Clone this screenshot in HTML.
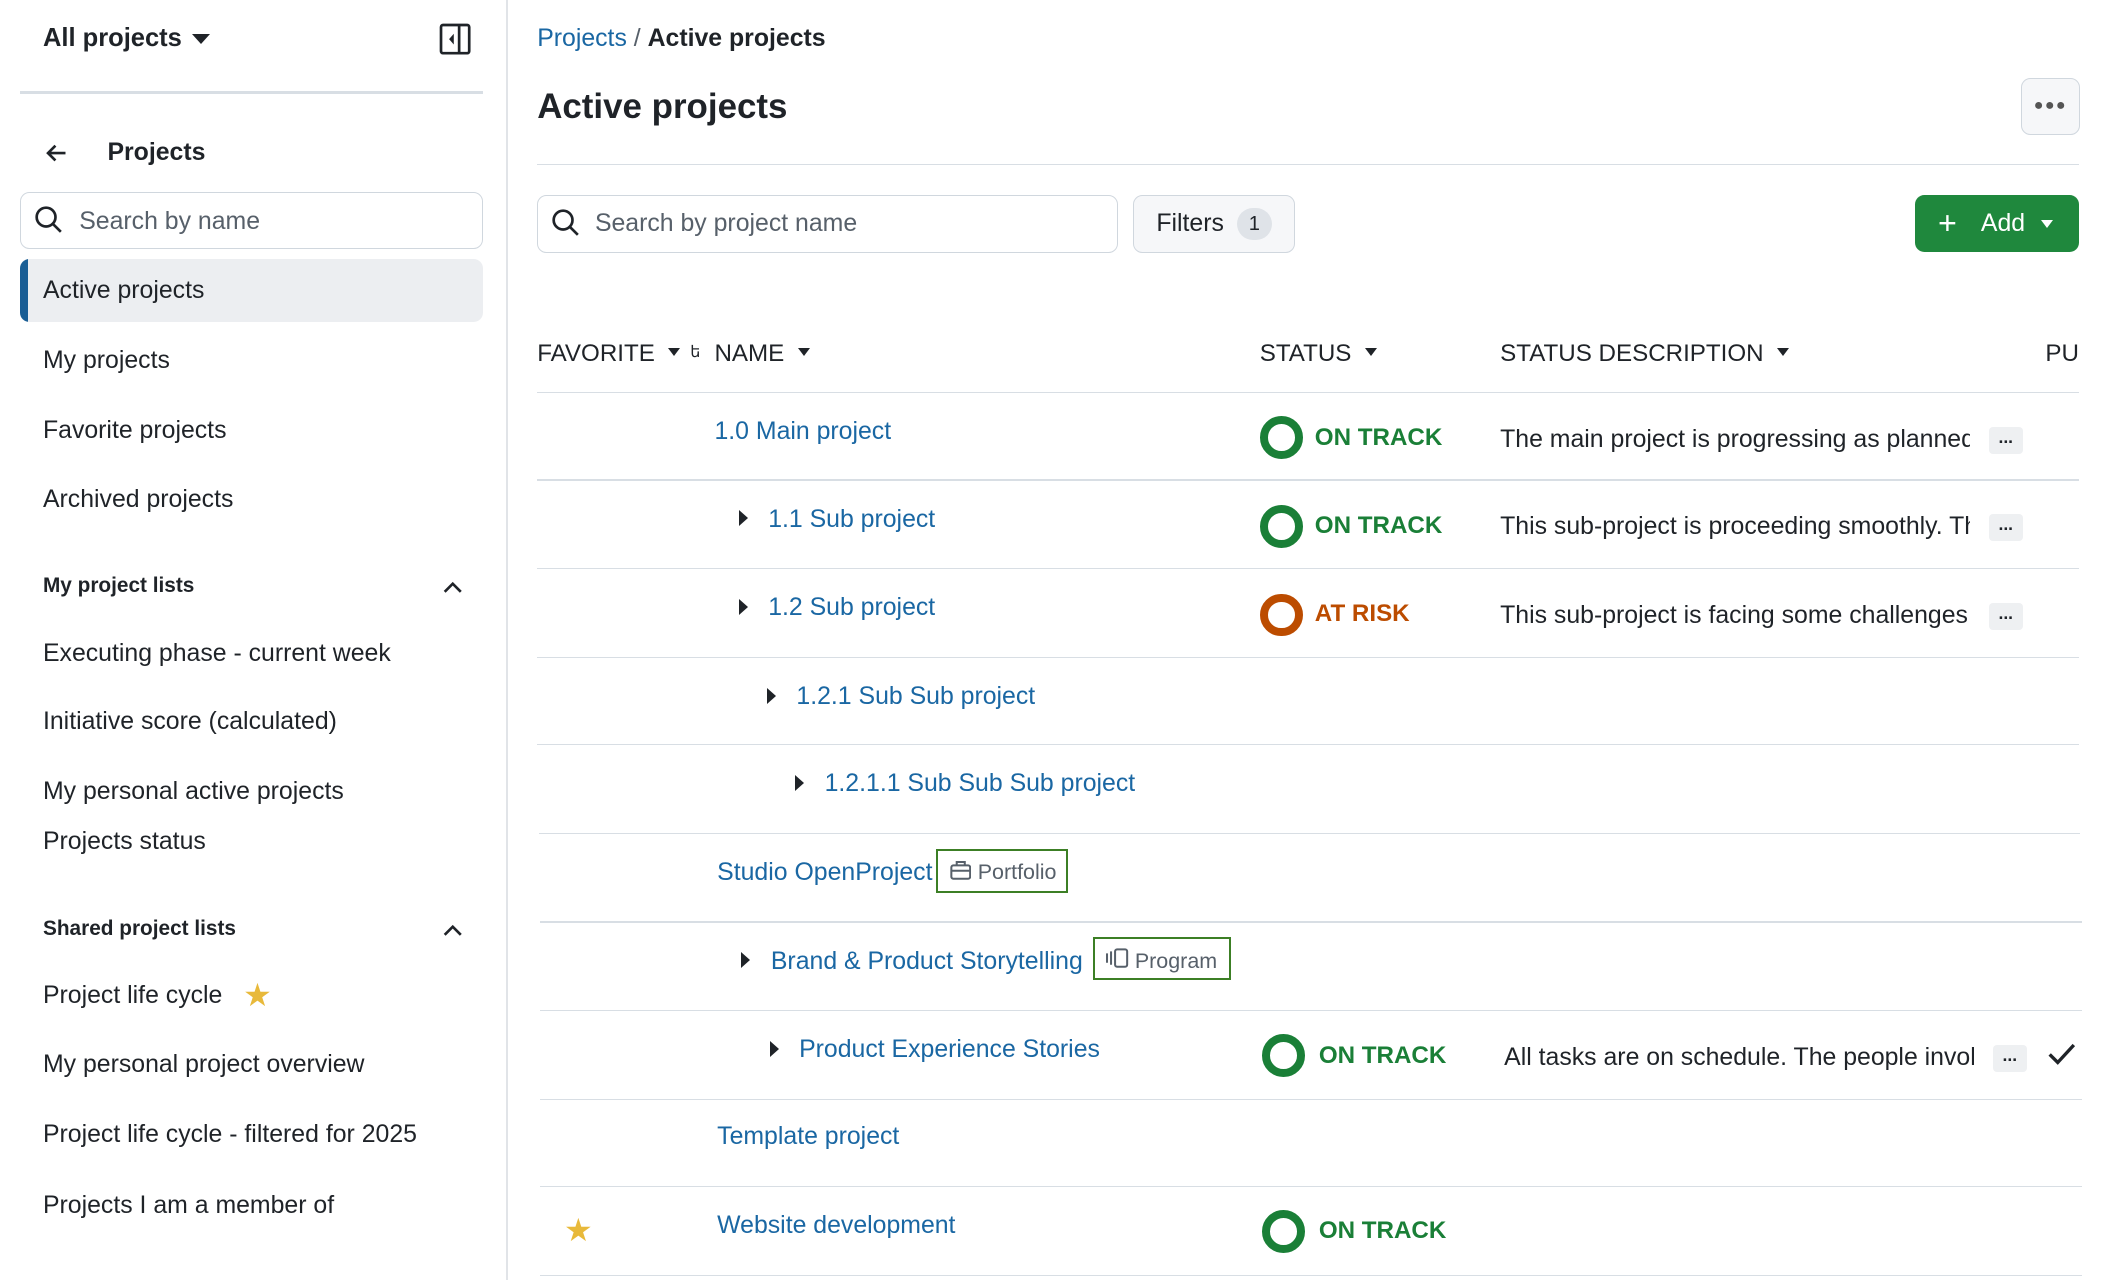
<!DOCTYPE html>
<html><head><meta charset="utf-8"><style>
html,body{margin:0;padding:0;background:#fff;overflow:hidden;width:2105px;height:1280px}
#w{zoom:1.343;width:1568px;height:954px;position:relative;font-family:"Liberation Sans",sans-serif;color:#1f2328;font-size:18.5px}
.a{position:absolute;white-space:nowrap;line-height:1}
.l{color:#1a67a3}
.hr{position:absolute;height:1px;background:#d8dee4}
.st{position:absolute;width:20px;height:20px;border-radius:50%;border:6px solid #1a7f37}
.ok{color:#1a7f37;font-weight:bold;font-size:18px}
.risk{color:#bc4c00;font-weight:bold;font-size:18px}
.dots{position:absolute;width:25px;height:20px;background:#eef0f2;border-radius:3px;font-size:13px;text-align:center;line-height:16px;font-weight:bold}
.car{position:absolute;width:0;height:0;border-top:6px solid transparent;border-bottom:6px solid transparent;border-left:7px solid #1f2328}
.dn{position:absolute;width:0;height:0;border-left:6px solid transparent;border-right:6px solid transparent;border-top:7px solid #1f2328}
.di{display:inline-block;width:0;height:0;border-left:5px solid transparent;border-right:5px solid transparent;border-top:6px solid #1f2328;vertical-align:middle;margin-left:10px;position:relative;top:-2px}
.desc{position:absolute;width:350px;overflow:hidden;white-space:nowrap;line-height:1.1}
</style></head><body><div id="w">
<!-- sidebar -->
<div style="position:absolute;left:377px;top:0;width:1px;height:954px;background:#e1e4e8"></div>
<div class="a" style="left:32px;top:19px;font-size:19px;font-weight:bold">All projects</div>
<div class="dn" style="left:143px;top:25px;border-width:8px 7px 0 7px"></div>
<svg class="a" style="left:327px;top:17px" width="24" height="24" viewBox="0 0 24 24"><rect x="1.5" y="1.5" width="21" height="21" rx="1.5" fill="none" stroke="#1f2328" stroke-width="2"/><line x1="15" y1="2" x2="15" y2="22" stroke="#1f2328" stroke-width="2"/><path d="M11 8v8l-3.5-4z" fill="#1f2328"/></svg>
<div class="hr" style="left:15px;top:68px;width:345px;height:2px"></div>
<svg class="a" style="left:33px;top:105px" width="18" height="18" viewBox="0 0 18 18"><path d="M16 9H3M8.5 3.5L3 9l5.5 5.5" fill="none" stroke="#1f2328" stroke-width="2"/></svg>
<div class="a" style="left:80px;top:105px;font-size:18.5px;font-weight:bold">Projects</div>
<div style="position:absolute;left:15px;top:143px;width:343px;height:41px;border:1px solid #d0d7de;border-radius:7px"></div>
<svg class="a" style="left:25px;top:153px" width="22" height="22" viewBox="0 0 22 22"><circle cx="9" cy="9" r="7" fill="none" stroke="#1f2328" stroke-width="2"/><path d="M14 14l6 6" stroke="#1f2328" stroke-width="2"/></svg>
<div class="a" style="left:59px;top:156px;color:#57606a">Search by name</div>
<div style="position:absolute;left:15px;top:193px;width:345px;height:47px;background:#eceef1;border-radius:7px;overflow:hidden"><div style="width:6px;height:47px;background:#1a5e95"></div></div>
<div class="a" style="left:32px;top:208px">Active projects</div>
<div class="a" style="left:32px;top:260px">My projects</div>
<div class="a" style="left:32px;top:312px">Favorite projects</div>
<div class="a" style="left:32px;top:363px">Archived projects</div>
<div class="a" style="left:32px;top:429px;font-size:15.5px;font-weight:bold">My project lists</div>
<svg class="a" style="left:329px;top:430px" width="16" height="14" viewBox="0 0 16 14"><path d="M2 11l6-6 6 6" fill="none" stroke="#1f2328" stroke-width="2"/></svg>
<div class="a" style="left:32px;top:478px">Executing phase - current week</div>
<div class="a" style="left:32px;top:529px">Initiative score (calculated)</div>
<div class="a" style="left:32px;top:581px">My personal active projects</div>
<div class="a" style="left:32px;top:618px">Projects status</div>
<div class="a" style="left:32px;top:684px;font-size:15.5px;font-weight:bold">Shared project lists</div>
<svg class="a" style="left:329px;top:685px" width="16" height="14" viewBox="0 0 16 14"><path d="M2 11l6-6 6 6" fill="none" stroke="#1f2328" stroke-width="2"/></svg>
<div class="a" style="left:32px;top:733px">Project life cycle</div>
<div class="a" style="left:181px;top:729px;color:#e8b93a;font-size:24px">★</div>
<div class="a" style="left:32px;top:784px">My personal project overview</div>
<div class="a" style="left:32px;top:836px">Project life cycle - filtered for 2025</div>
<div class="a" style="left:32px;top:889px">Projects I am a member of</div>
<!-- main -->
<div class="a" style="left:400px;top:20px"><span class="l">Projects</span> <span style="color:#57606a">/</span> <span style="font-weight:bold">Active projects</span></div>
<div class="a" style="left:400px;top:67px;font-size:26px;font-weight:bold">Active projects</div>
<div style="position:absolute;left:1505px;top:58px;width:42px;height:41px;background:#f6f7f9;border:1px solid #d0d7de;border-radius:7px;text-align:center;line-height:40px;font-weight:bold;color:#555;letter-spacing:1px;font-size:12px">●●●</div>
<div class="hr" style="left:400px;top:122px;width:1148px"></div>
<div style="position:absolute;left:400px;top:145px;width:431px;height:42px;border:1px solid #d0d7de;border-radius:7px"></div>
<svg class="a" style="left:410px;top:155px" width="22" height="22" viewBox="0 0 22 22"><circle cx="9" cy="9" r="7" fill="none" stroke="#1f2328" stroke-width="2"/><path d="M14 14l6 6" stroke="#1f2328" stroke-width="2"/></svg>
<div class="a" style="left:443px;top:158px;color:#57606a">Search by project name</div>
<div style="position:absolute;left:844px;top:145px;width:119px;height:42px;background:#f6f7f9;border:1px solid #d0d7de;border-radius:7px"></div>
<div class="a" style="left:861px;top:158px">Filters</div>
<div style="position:absolute;left:921px;top:155px;width:26px;height:24px;border-radius:12px;background:#dfe3e8;font-size:15px;text-align:center;line-height:24px">1</div>
<div style="position:absolute;left:1426px;top:145px;width:122px;height:43px;background:#1f883d;border-radius:7px"></div>
<div class="a" style="left:1443px;top:154px;color:#fff;font-size:24px">+</div>
<div class="a" style="left:1475px;top:158px;color:#fff">Add</div>
<div class="dn" style="left:1520px;top:164px;border-top-color:#fff;border-width:6px 5px 0 5px"></div>
<!-- header -->
<div class="a" style="left:400px;top:255px;font-size:18px">FAVORITE<span class="di"></span></div>
<div class="a" style="left:514px;top:256px;font-size:12px">ե</div>
<div class="a" style="left:532px;top:255px;font-size:18px">NAME<span class="di"></span></div>
<div class="a" style="left:938px;top:255px;font-size:18px">STATUS<span class="di"></span></div>
<div class="a" style="left:1117px;top:255px;font-size:18px">STATUS DESCRIPTION<span class="di"></span></div>
<div class="a" style="left:1523px;top:255px;font-size:18px;width:25px;overflow:hidden">PU</div>
<div class="hr" style="left:400px;top:292px;width:1148px"></div>
<div class="hr" style="left:400px;top:357px;width:1148px"></div>
<div class="hr" style="left:400px;top:423px;width:1148px"></div>
<div class="hr" style="left:400px;top:489px;width:1148px"></div>
<div class="hr" style="left:400px;top:554px;width:1148px"></div>
<div class="hr" style="left:401px;top:620px;width:1148px"></div>
<div class="hr" style="left:402px;top:686px;width:1148px"></div>
<div class="hr" style="left:402px;top:752px;width:1148px"></div>
<div class="hr" style="left:402px;top:818px;width:1148px"></div>
<div class="hr" style="left:402px;top:883px;width:1148px"></div>
<div class="hr" style="left:402px;top:949px;width:1148px"></div>
<!-- rows -->
<div class="a l" style="left:532px;top:313px">1.0 Main project</div>
<div class="st" style="left:938px;top:310px"></div><div class="a ok" style="left:979px;top:317px">ON TRACK</div>
<div class="desc" style="left:1117px;top:317px">The main project is progressing as planned</div><div class="dots" style="left:1481px;top:318px">...</div>

<div class="car" style="left:550px;top:380px"></div><div class="a l" style="left:572px;top:378px">1.1 Sub project</div>
<div class="st" style="left:938px;top:376px"></div><div class="a ok" style="left:979px;top:383px">ON TRACK</div>
<div class="desc" style="left:1117px;top:382px">This sub-project is proceeding smoothly. The</div><div class="dots" style="left:1481px;top:383px">...</div>

<div class="car" style="left:550px;top:446px"></div><div class="a l" style="left:572px;top:444px">1.2 Sub project</div>
<div class="st" style="left:938px;top:442px;border-color:#bc4c00"></div><div class="a risk" style="left:979px;top:448px">AT RISK</div>
<div class="desc" style="left:1117px;top:448px">This sub-project is facing some challenges</div><div class="dots" style="left:1481px;top:449px">...</div>

<div class="car" style="left:571px;top:512px"></div><div class="a l" style="left:593px;top:510px">1.2.1 Sub Sub project</div>
<div class="car" style="left:592px;top:577px"></div><div class="a l" style="left:614px;top:575px">1.2.1.1 Sub Sub Sub project</div>

<div class="a l" style="left:534px;top:641px">Studio OpenProject</div>
<div style="position:absolute;left:697px;top:632px;width:95px;height:30px;border:2px solid #3c7f25"></div>
<svg class="a" style="left:707px;top:640px" width="16" height="15" viewBox="0 0 16 15"><rect x="1" y="4" width="14" height="10" rx="1.5" fill="none" stroke="#57606a" stroke-width="1.5"/><path d="M5 4V1.5h6V4M1 8h14" fill="none" stroke="#57606a" stroke-width="1.5"/></svg>
<div class="a" style="left:728px;top:642px;color:#57606a;font-size:16px">Portfolio</div>

<div class="car" style="left:552px;top:709px"></div><div class="a l" style="left:574px;top:707px">Brand &amp; Product Storytelling</div>
<div style="position:absolute;left:814px;top:698px;width:100px;height:29px;border:2px solid #3c7f25"></div>
<svg class="a" style="left:823px;top:706px" width="18" height="15" viewBox="0 0 18 15"><path d="M1.5 4v7M4.5 2.5v10" stroke="#57606a" stroke-width="1.5"/><rect x="7.5" y="1" width="9" height="13" rx="1.5" fill="none" stroke="#57606a" stroke-width="1.5"/></svg>
<div class="a" style="left:845px;top:708px;color:#57606a;font-size:16px">Program</div>

<div class="car" style="left:573px;top:775px"></div><div class="a l" style="left:595px;top:773px">Product Experience Stories</div>
<div class="st" style="left:940px;top:770px"></div><div class="a ok" style="left:982px;top:777px">ON TRACK</div>
<div class="desc" style="left:1120px;top:777px">All tasks are on schedule. The people involved</div><div class="dots" style="left:1484px;top:778px">...</div>
<svg class="a" style="left:1524px;top:775px" width="22" height="20" viewBox="0 0 22 20"><path d="M2 10l6 6L20 3" fill="none" stroke="#1f2328" stroke-width="2.5"/></svg>

<div class="a l" style="left:534px;top:838px">Template project</div>

<div class="a" style="left:420px;top:904px;color:#e8b93a;font-size:24px">★</div>
<div class="a l" style="left:534px;top:904px">Website development</div>
<div class="st" style="left:940px;top:901px"></div><div class="a ok" style="left:982px;top:908px">ON TRACK</div>
</div></body></html>
